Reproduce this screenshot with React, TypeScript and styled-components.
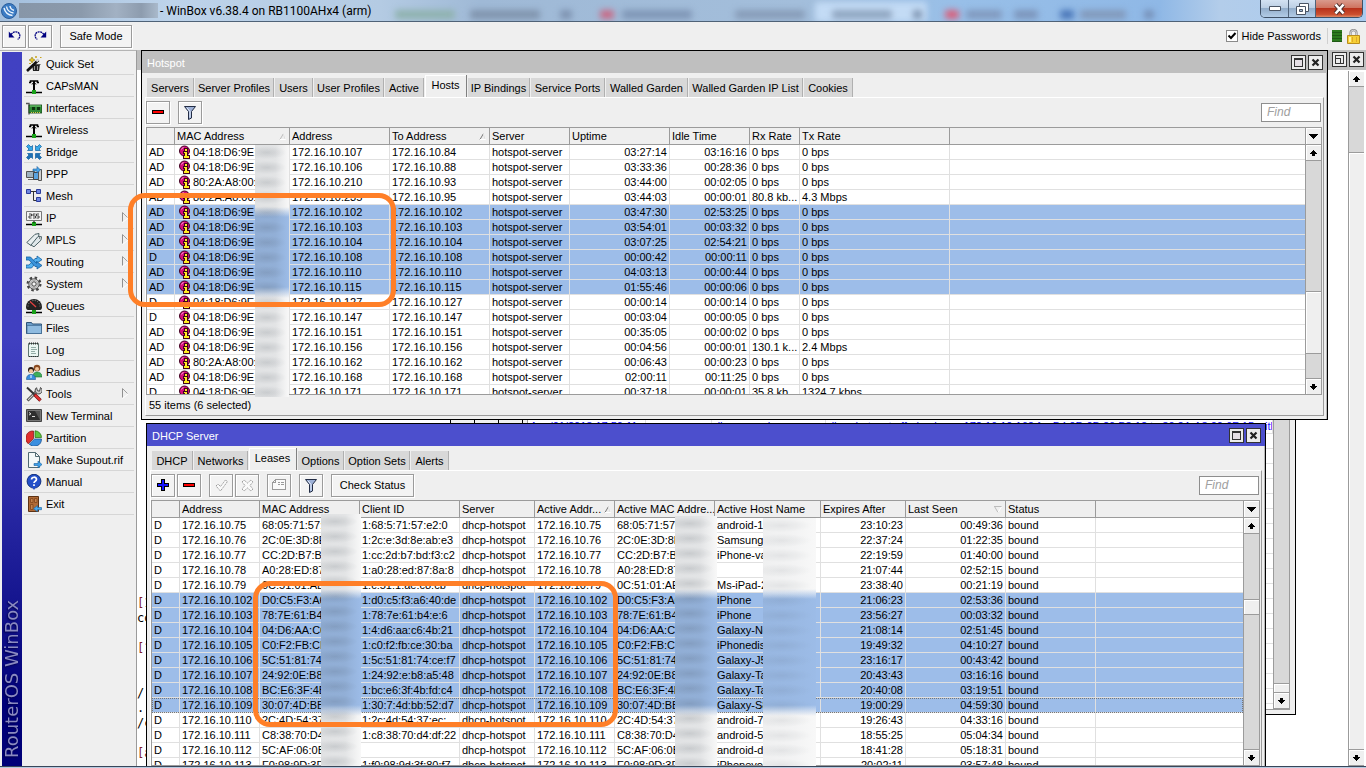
import React from "react";
import styled, { createGlobalStyle, css } from "styled-components";

const GlobalStyle = createGlobalStyle`
  * { box-sizing: border-box; }
  html, body { margin: 0; padding: 0; height: 100%; overflow: hidden; }
  body, button, input, table {
    font-family: "Liberation Sans", Arial, sans-serif;
    font-size: 11px;
    line-height: 14px;
    color: #000;
  }
`;

const face = "#efefef";
const edge = "#9b9b9b";
const dim = "#d8d8d8";
const select = "#9dbde9";
const grid = "#e0e0e0";

/* ---------- application frame ---------- */

const Shell = styled.div`
  height: 100vh;
  display: flex;
  flex-direction: column;
  overflow: hidden;
  background: ${face};
`;

const TitleBar = styled.header`
  position: relative;
  flex: none;
  height: 22px;
  display: flex;
  align-items: center;
  gap: 2px;
  padding-left: 1px;
  overflow: hidden;
  border-bottom: 1px solid #4f6277;
  background: linear-gradient(90deg, #a3bfdd 0, #bdd3ea 170px, #b4cbe3 380px, #9fb9d6 480px, #a3bedb 800px, #98bfe8 960px, #8fb8e6 1160px, #b3cdea 1220px, #a9cbf0 100%);
`;

const Smudge = styled.span<{ $x: number; $w: number; $c: string; $y?: number; $h?: number }>`
  position: absolute;
  left: ${(p) => p.$x}px;
  top: ${(p) => p.$y ?? 10}px;
  width: ${(p) => p.$w}px;
  height: ${(p) => p.$h ?? 9}px;
  border-radius: 3px;
  background: ${(p) => p.$c};
  filter: blur(3px);
`;

const HiddenName = styled.span`
  width: 139px;
  height: 15px;
  background: linear-gradient(90deg, #8796a8, #8b9aac 45%, #a2b1c3 70%, #8d9cae 88%, #a9b9cb);
`;

const TitleText = styled.h1`
  position: relative;
  margin: 0;
  font: 12px/18px Roboto, "Open Sans", sans-serif;
  white-space: nowrap;
`;

const WinControls = styled.div`
  position: relative;
  align-self: flex-start;
  margin-left: auto;
  margin-right: 3px;
  display: flex;
  height: 18px;
  border: 1px solid #3f5066;
  border-top: 0;
  border-radius: 0 0 5px 5px;
  overflow: hidden;
`;

const WinControl = styled.button<{ $w: number; $close?: boolean }>`
  width: ${(p) => p.$w}px;
  padding: 0;
  border: 0;
  border-right: ${(p) => (p.$close ? "0" : "1px solid #50637a")};
  display: flex;
  align-items: center;
  justify-content: center;
  background: ${(p) =>
    p.$close
      ? "linear-gradient(#d99a8c 0, #cf7460 45%, #b8321b 50%, #cb4f30 85%, #e08a66)"
      : "linear-gradient(#d3e2f2 0, #bccfe4 45%, #93aecb 50%, #b2cbe6)"};
`;

const ToolStrip = styled.div`
  flex: none;
  height: 28px;
  display: flex;
  align-items: center;
  gap: 2px;
  padding: 0 6px 0 2px;
`;

const PushButton = styled.button<{ $gap?: number; $w?: number }>`
  flex: none;
  height: 23px;
  width: ${(p) => p.$w ?? 24}px;
  margin-left: ${(p) => p.$gap ?? 0}px;
  padding: 0;
  display: flex;
  align-items: center;
  justify-content: center;
  border: 1px solid ${edge};
  background: #f3f3f3;
  box-shadow: inset 1px 1px #fff, 1px 1px #fff;
  white-space: nowrap;
`;

const HideLabel = styled.label`
  margin-left: auto;
  display: flex;
  align-items: center;
  gap: 4px;
  padding-right: 4px;
`;

const TickBox = styled.input`
  appearance: none;
  width: 12px;
  height: 12px;
  margin: 0;
  border: 1px solid #8a8a8a;
  background: #fff
    url("data:image/svg+xml,%3Csvg xmlns='http://www.w3.org/2000/svg' width='10' height='10'%3E%3Cpath d='M1.500 4.500l2.500 2.500 4.500-5' fill='none' stroke='black' stroke-width='2'/%3E%3C/svg%3E")
    center no-repeat;
`;

const StripRule = styled.span`
  width: 1px;
  height: 16px;
  margin-right: 2px;
  background: #d0d0d0;
`;

const LoadMeter = styled.span`
  width: 10px;
  height: 12px;
  margin-right: 3px;
  background: repeating-linear-gradient(#2c7a1e 0 2px, #1f5a15 2px 3px);
`;

const Body = styled.div`
  flex: 1;
  min-height: 0;
  display: flex;
`;

const TaskEdge = styled.footer`
  flex: none;
  height: 2px;
  border-top: 1px solid #38465a;
  background: #b9cbe0;
`;

/* ---------- left side ---------- */

const Side = styled.aside`
  flex: none;
  width: 137px;
  display: flex;
  padding: 1px 0 0 2px;
  border-top: 1px solid #b4b4b4;
  border-right: 1px solid ${edge};
`;

const Brand = styled.div`
  flex: none;
  width: 20px;
  display: flex;
  align-items: center;
  padding-top: 8px;
  writing-mode: vertical-rl;
  transform: rotate(180deg);
  background: linear-gradient(#000078 8%, #2a2aa6 38%, #4040c0 60%, #4141c2);
  color: #8a8ac0;
  font: 18px/20px "DejaVu Sans", sans-serif;
  text-shadow: -1px -1px 2px #00004c;
  white-space: nowrap;
`;

const Menu = styled.nav`
  flex: 1;
  min-width: 0;
  padding: 1px 2px 0 2px;
`;

const MenuItem = styled.button`
  width: 100%;
  height: 22px;
  display: flex;
  align-items: center;
  gap: 4px;
  padding: 0 5px 0 2px;
  border: 0;
  border-bottom: 1px solid #d6d6d6;
  background: none;
  text-align: left;
  white-space: nowrap;
`;

const MenuText = styled.span`
  flex: 1;
`;

/* ---------- windows ---------- */

const Desktop = styled.main`
  position: relative;
  flex: 1;
  min-width: 0;
  overflow: hidden;
  display: flex;
  flex-direction: column;
  background: #fff;
`;

const ParentBar = styled.div`
  flex: none;
  height: 20px;
  display: flex;
  align-items: center;
  justify-content: flex-end;
  gap: 2px;
  padding: 0 2px 1px 0;
  background: #bfbfbf;
`;

const ParentBody = styled.div`
  flex: 1;
  min-height: 0;
  display: flex;
  padding: 1px 2px 0 0;
`;

const Terminal = styled.pre`
  flex: 1;
  margin: 0;
  padding-bottom: 5px;
  align-self: flex-end;
  font: 12px/15px "DejaVu Sans Mono", monospace;
`;

const Maroon = styled.span`
  color: #80202a;
`;

const Win = styled.section<{ $l: number; $r: number; $t: number; $h?: number }>`
  position: absolute;
  left: ${(p) => p.$l}px;
  right: ${(p) => p.$r}px;
  top: ${(p) => p.$t}px;
  display: flex;
  flex-direction: column;
  border: 1px solid #000;
  background: ${face};
  overflow: hidden;
  ${(p) => (p.$h ? css`height: ${p.$h}px;` : css`bottom: 0; border-bottom: 0;`)}
`;

const WinBar = styled.div<{ $active?: boolean }>`
  flex: none;
  height: 22px;
  display: flex;
  align-items: center;
  gap: 2px;
  padding: 1px 4px 0 5px;
  color: #fff;
  background: ${(p) => (p.$active ? "#4c4fcd" : "#bfbfbf")};
`;

const WinName = styled.h2`
  flex: 1;
  margin: 0;
  font-size: 11px;
  font-weight: 400;
`;

const BarButton = styled.button`
  width: 15px;
  height: 15px;
  padding: 0;
  display: flex;
  align-items: center;
  justify-content: center;
  border: 1px solid #333;
  background: #ececec;
`;

const WinBody = styled.div<{ $open?: boolean }>`
  flex: 1;
  min-height: 0;
  display: flex;
  flex-direction: column;
  padding: ${(p) => (p.$open ? "0 3px 0 3px" : "0 3px 3px 3px")};
  box-shadow: inset -1px 0 #b8b8b8;
`;

const Tabs = styled.div`
  flex: none;
  height: 24px;
  display: flex;
  align-items: flex-end;
  gap: 1px;
  padding-left: 2px;
`;

const Tab = styled.button<{ $w: number; $on?: boolean }>`
  flex: none;
  width: ${(p) => p.$w}px;
  height: ${(p) => (p.$on ? 22 : 19)}px;
  padding: ${(p) => (p.$on ? "0 0 3px" : "1px 0 0")};
  border: 0;
  border-right: 1px solid ${(p) => (p.$on ? "#808080" : "#b0b0b0")};
  background: ${(p) => (p.$on ? face : dim)};
  box-shadow: ${(p) => (p.$on ? "inset 1px 1px #fff" : "none")};
  white-space: nowrap;
`;

const Panel = styled.div<{ $open?: boolean }>`
  flex: 1;
  min-height: 0;
  display: flex;
  flex-direction: column;
  padding-right: 1px;
  border: 1px solid #fff;
  border-right-color: ${edge};
  border-bottom: ${(p) => (p.$open ? "0" : `1px solid ${edge}`)};
`;

const Tools = styled.div`
  flex: none;
  height: 29px;
  display: flex;
  align-items: center;
  gap: 2px;
  padding: 0 1px 1px 0;
`;

const Find = styled.input`
  width: 60px;
  height: 19px;
  margin-left: auto;
  padding: 0 5px;
  border: 1px solid #8e8e8e;
  border-radius: 0;
  background: #fff;
  font-size: 12px;
  &::placeholder {
    color: #a0a0a0;
    font-style: italic;
  }
`;

const GridBox = styled.div`
  flex: 1;
  min-height: 0;
  display: flex;
  border: 1px solid ${edge};
  background: #fff;
`;

const GridView = styled.div`
  flex: 1;
  min-width: 0;
  overflow: hidden;
`;

const GridTable = styled.table`
  width: 100%;
  table-layout: fixed;
  border-collapse: separate;
  border-spacing: 0;
`;

const HeadCell = styled.th<{ $last?: boolean }>`
  height: 17px;
  padding: 0 0 0 2px;
  font-weight: 400;
  text-align: left;
  white-space: nowrap;
  overflow: hidden;
  background: ${face};
  border-bottom: 1px solid ${edge};
  border-right: ${(p) => (p.$last ? "0" : `1px solid ${edge}`)};
`;

const HeadFlex = styled.span`
  display: flex;
  align-items: center;
  justify-content: space-between;
  padding-right: 3px;
`;

const Row = styled.tr<{ $sel?: boolean; $focus?: boolean }>`
  background: ${(p) => (p.$sel ? select : "#fff")};
  ${(p) => p.$focus && css`outline: 1px dotted #777; outline-offset: -1px;`}
`;

const Cell = styled.td<{ $right?: boolean; $last?: boolean }>`
  height: 15px;
  padding: ${(p) => (p.$right ? "0 2px" : "0 0 0 2px")};
  line-height: 14px;
  white-space: nowrap;
  overflow: hidden;
  text-overflow: clip;
  text-align: ${(p) => (p.$right ? "right" : "left")};
  border-bottom: 1px solid ${grid};
  border-right: ${(p) => (p.$last ? "0" : `1px solid ${grid}`)};
`;

const WithMark = styled.span`
  display: flex;
  align-items: center;
  gap: 2px;
  height: 14px;
  padding-left: 2px;
`;

const StatusLine = styled.div`
  flex: none;
  height: 20px;
  padding: 3px 3px;
`;

/* ---------- scrollbars ---------- */

const ScrollCol = styled.div`
  flex: none;
  width: 16px;
  display: flex;
  flex-direction: column;
  border-left: 1px solid ${edge};
  background: ${dim};
`;

const ScrollButton = styled.button<{ $h?: number; $line?: "top" | "bottom" }>`
  flex: none;
  width: 100%;
  height: ${(p) => p.$h ?? 16}px;
  padding: 0;
  border: 0;
  border-bottom: ${(p) => (p.$line === "top" ? "0" : `1px solid ${edge}`)};
  border-top: ${(p) => (p.$line === "top" ? `1px solid ${edge}` : "0")};
  background: ${face};
  box-shadow: inset 1px 1px #fff;
  display: flex;
  align-items: center;
  justify-content: center;
`;

const Track = styled.div<{ $above: number; $below: number }>`
  flex: 1;
  min-height: 0;
  display: flex;
  padding: ${(p) => p.$above}px 0 ${(p) => p.$below}px;
`;

const Thumb = styled.div`
  flex: 1;
  border-top: 1px solid ${edge};
  border-bottom: 1px solid ${edge};
  background: ${face};
  box-shadow: inset 1px 1px #fff;
`;

/* ---------- overlays ---------- */

const Redacted = styled.div<{ $x: number; $y: number; $w: number; $to: number; $a: number; $b: number; $soft?: boolean }>`
  position: absolute;
  left: ${(p) => p.$x}px;
  top: ${(p) => p.$y}px;
  width: ${(p) => p.$w}px;
  height: ${(p) => p.$to - p.$y}px;
  background:
    radial-gradient(ellipse at 35% 50%, rgba(50, 60, 70, ${(p) => (p.$soft ? 0.08 : 0.14)}), transparent 62%) 0 0 / 100% 15px,
    linear-gradient(90deg, rgba(70, 80, 90, ${(p) => (p.$soft ? 0.06 : 0.14)}), rgba(70, 80, 90, ${(p) => (p.$soft ? 0.04 : 0.13)}) 60%, rgba(90, 90, 90, 0.01)),
    linear-gradient(#fafafa ${(p) => p.$a - 4}px, ${select} ${(p) => p.$a + 6}px, ${select} ${(p) => p.$b - 6}px, #fafafa ${(p) => p.$b + 5}px);
`;

const Ring = styled.div<{ $x: number; $y: number; $w: number; $h: number }>`
  position: absolute;
  left: ${(p) => p.$x}px;
  top: ${(p) => p.$y}px;
  width: ${(p) => p.$w}px;
  height: ${(p) => p.$h}px;
  border: 5px solid #ff7f27;
  border-radius: 17px;
  pointer-events: none;
`;

const Stage = styled.div`
  position: relative;
  flex: 1;
  min-width: 0;
  display: flex;
`;

/* ---------- log window ---------- */

const LogInner = styled.div`
  flex: 1;
  min-height: 0;
  margin: 3px 5px 4px 4px;
  display: flex;
  border: 1px solid ${edge};
  background: #fff;
`;

const LogRow = styled.div`
  height: 15px;
  display: flex;
  border-bottom: 1px solid ${grid};
  color: #1414ff;
  white-space: nowrap;
  overflow: hidden;
`;

const LogCell = styled.span<{ $w?: number }>`
  flex: ${(p) => (p.$w ? "none" : "1")};
  width: ${(p) => (p.$w ? `${p.$w}px` : "auto")};
  padding-left: 2px;
  border-right: 1px solid ${grid};
  overflow: hidden;
`;

/* ---------- glyphs ---------- */

const Svg = ({ w = 16, h = 16, children, crisp }: { w?: number; h?: number; children: React.ReactNode; crisp?: boolean }) => (
  <svg width={w} height={h} viewBox={`0 0 ${w} ${h}`} fill="none" aria-hidden="true" shapeRendering={crisp ? "crispEdges" : "auto"}>
    {children}
  </svg>
);

const ArrowUp = () => (
  <Svg w={9} h={6} crisp><path d="M4 0h1v1h1v1h1v1h1v1H6v2H3V4H1V3h1V2h1V1h1z" fill="#000" /></Svg>
);
const ArrowDown = () => (
  <Svg w={9} h={6} crisp><path d="M3 0h3v2h2v1H7v1H6v1H5v1H4V5H3V4H2V3H1V2h2z" fill="#000" /></Svg>
);
const DropArrow = () => (
  <Svg w={9} h={5} crisp><path d="M0 0h9v1H8v1H7v1H6v1H5v1H4V4H3V3H2V2H1V1H0z" fill="#000" /></Svg>
);
const SortUp = ({ faint }: { faint?: boolean }) => (
  <Svg w={7} h={7}><path d="M1 6.500L4.500.5" stroke={faint ? "#bbb" : "#777"} /><path d="M4.500.5L6.500 6.500H1" stroke="#fff" /><path d="M4.500 1l1.500 5" stroke="#ddd" /></Svg>
);
const SortDown = () => (
  <Svg w={8} h={7}><path d="M0 .5h7.500M.5.5l3.500 6" stroke="#bbb" /><path d="M7.500 1L4 6.500" stroke="#fff" /></Svg>
);
const MaxGlyph = () => (
  <Svg w={9} h={9} crisp><path d="M.5.5h8v8h-8z" stroke="#333" fill="#e6e0e6" /><path d="M0 0h9v2H0z" fill="#333" /></Svg>
);
const RestoreGlyph = () => (
  <Svg w={9} h={9} crisp><path d="M.5.5h8v8h-8z" stroke="#333" /><path d="M.5 3.500h5v5" stroke="#333" /></Svg>
);
const CloseGlyph = () => (
  <Svg w={9} h={9}><path d="M1.500 1.500l6 6M7.500 1.500l-6 6" stroke="#222" strokeWidth="2.200" /></Svg>
);
const Funnel = () => (
  <Svg w={14} h={15}>
    <path d="M1.500 1.500h11L8.500 6.500v6.500l-3 1.500v-8z" fill="#9db0d6" stroke="#222c44" strokeLinejoin="round" />
    <path d="M4 2.800l3 3.700v6" stroke="#e6eefc" />
  </Svg>
);
const Minus = () => (
  <Svg w={12} h={4} crisp><path d="M0 0h12v4H0z" fill="#000" /><path d="M1 1h10v2H1z" fill="#f00" /></Svg>
);
const Plus = () => (
  <Svg w={12} h={12} crisp><path d="M4 0h4v4h4v4H8v4H4V8H0V4h4z" fill="#000" /><path d="M5 1h2v4h4v2H7v4H5V7H1V5h4z" fill="#1414ff" /></Svg>
);
const Check = () => (
  <Svg w={13} h={13}><path d="M1 7l2-2 2.500 2.500L10.500 1l2 1.500-7 9.500z" stroke="#9c9c9c" strokeDasharray="1.500 .7" fill="#fafafa" /></Svg>
);
const Cross = () => (
  <Svg w={13} h={13}><path d="M1 3l2-2 3.500 3L10 1l2 2-3 3.500L12 10l-2 2-3.500-3L3 12l-2-2 3-3.500z" stroke="#9c9c9c" strokeDasharray="1.500 .7" fill="#fafafa" /></Svg>
);
const Note = () => (
  <Svg w={14} h={12} crisp><path d="M3.500.5h10v10H.5v-7z" stroke="#9a9a9a" fill="#fafafa" /><path d="M3.500.5v3H.5M6 3.500h2m1 0h3M6 5.500h2m1 0h3" stroke="#9a9a9a" /></Svg>
);
const Undo = () => (
  <Svg w={13} h={12}><path d="M3 4.500C5 2 8 .8 10.500 2.800c2.200 2 1.500 5.200-.8 6.700" stroke="#000080" strokeWidth="1.300" strokeDasharray="2 .6" /><path d="M.8 1.500V7.500H6.500z" fill="#000080" /></Svg>
);
const Redo = () => (
  <Svg w={13} h={12}><path d="M10 4.500C8 2 5 .8 2.500 2.800.3 4.800 1 8 3.300 9.500" stroke="#000080" strokeWidth="1.300" strokeDasharray="2 .6" /><path d="M12.200 1.500V7.500H6.500z" fill="#000080" /></Svg>
);
const Lock = () => (
  <Svg w={13} h={15}>
    <path d="M3.500 7V4.200a3 3 0 016 0V7" stroke="#8b8b8b" strokeWidth="2.200" /><path d="M3.500 7V4.200a3 3 0 016 0V7" stroke="#e6e6e6" strokeWidth=".8" />
    <path d="M.5 6.500h12v8H.5z" fill="#f6cf35" stroke="#b98d1e" /><path d="M2 8h2v5H2z" fill="#fff09a" /><path d="M5 8h1v5H5zM9 8h1v5H9z" fill="#e0a92a" />
  </Svg>
);
const HostMark = () => (
  <Svg w={12} h={14}>
    <circle cx="5.500" cy="6" r="5" fill="#d4107c" stroke="#400020" /><path d="M2.500 4.500a3.500 3.500 0 012-2" stroke="#ffb0dc" />
    <path d="M5 3h4v3h0v4h2v4H4v-4h1V9H4V6h1z" fill="#400020" /><path d="M6 4h2v2H6zM5 7h3v4h2v2H5v-2h1V8H5z" fill="#ffee20" />
  </Svg>
);
const SubArrow = () => (
  <Svg w={7} h={11}><path d="M.5.5v9" stroke="#909090" /><path d="M.5.5l5 5" stroke="#a0a0a0" /><path d="M6 6L.5 10.500" stroke="#fff" /></Svg>
);
const AppMark = () => (
  <Svg w={16} h={16}>
    <circle cx="8" cy="8" r="7.500" fill="#3b7cc4" stroke="#2a5e9c" />
    <path d="M3 5c1 4 4 7 8.500 7.500M5.500 3.500c.5 3 3 6 7 6.500M9 3c0 1.500 1.500 4 4 4.300" stroke="#eaf4ff" strokeWidth="1.400" />
  </Svg>
);

const Antenna = () => (
  <>
    <path d="M0 14.500h16" stroke="#000" strokeWidth="1.500" /><path d="M8 3v9" stroke="#000" strokeWidth="2" />
    <path d="M3 4.500h1.500V3h7v1.500H13" stroke="#000" strokeWidth="1.500" /><path d="M6 6.500L8 4l2 2.500" stroke="#000" />
    <path d="M6 12h4v4H6z" fill="#18a018" />
  </>
);

const menuArt: Record<string, React.ReactNode> = {
  wand: (
    <>
      <path d="M6 8h8l-1 7H7z" fill="#222" /><path d="M8.500 10v4M11.500 10v4" stroke="#999" /><path d="M6 8.500h8.500" stroke="#555" />
      <path d="M1 15L12.500 4" stroke="#111" strokeWidth="2.600" /><path d="M10.500 5.500l2-2" stroke="#ddd" strokeWidth="2" />
      <path d="M6 1l1 2 2 1-2 1-1 2-1-2-2-1 2-1z" fill="#e6c52a" stroke="#8f7a14" strokeWidth=".6" /><path d="M10 0v2M9 1h2M3 7.500h2M14 1.500h1.500" stroke="#c9a51c" />
    </>
  ),
  antenna: <Antenna />,
  card: (
    <>
      <path d="M0 3.500h3v11" stroke="#555" strokeWidth="1.400" /><path d="M3 5h13v8H3z" fill="#2f8a35" stroke="#143f16" strokeWidth=".8" />
      <path d="M6 7h3v3H6zM11 7h3v3h-3z" fill="#0d3510" /><path d="M5 12.500h9" stroke="#d8c94a" strokeDasharray="1 1" /><path d="M4 6h11" stroke="#7bd07d" />
    </>
  ),
  bridge: (
    <g fill="#38a9e8" stroke="#0f5f9f" strokeWidth=".7">
      <path d="M.5 2.500l2-2L5 3l1.500-1.500v5h-5L3 5z" /><path d="M15.500 2.500l-2-2L11 3 9.500 1.500v5h5L13 5z" />
      <path d="M.5 13.500l2 2L5 13l1.500 1.500v-5h-5L3 11z" fill="#1d6fb4" /><path d="M15.500 13.500l-2 2L11 13l-1.500 1.500v-5h5L13 11z" fill="#1d6fb4" />
    </g>
  ),
  ppp: (
    <>
      <path d="M.5 5.500h8v6h-8z" fill="#9fb2c0" stroke="#555" /><path d="M2 13.500h6" stroke="#666" />
      <path d="M7.500 6.500h6v7h-6z" fill="#5aa3e0" stroke="#444" /><path d="M12.500 3.500h3v11h-3z" fill="#cfcfcf" stroke="#555" />
      <path d="M7 3h4V.5L14.500 4 11 7V5H7z" fill="#4aa5ea" stroke="#1d5e9a" strokeWidth=".6" />
    </>
  ),
  mesh: (
    <>
      <path d="M4 3.500h7M7.500 3.500v9H11" stroke="#333" />
      <g fill="#6f86e0" stroke="#2c3c9c"><path d="M.5 1.500h4v4h-4z" /><path d="M10.500 1.500h4v4h-4z" /><path d="M10.500 9.500h4v4h-4z" /></g>
    </>
  ),
  ip: (
    <>
      <path d="M.5 1.500h15v9H.5z" fill="#f4f4f4" stroke="#777" />
      <path d="M3 4h2.500v2H3v2h2.500M9.500 4H7v2h2.500v2H7M13 4h-2.500v2H13v2h-2.500" stroke="#333" strokeWidth=".9" />
      <path d="M0 14.500h16" stroke="#000" strokeWidth="1.500" /><path d="M6 12h4v4H6z" fill="#18a018" /><path d="M8 11v2" stroke="#000" />
    </>
  ),
  mpls: (
    <>
      <path d="M.8 10.500L9 2.300l4-.8-.5 3.800L5 13.500z" fill="#e8eef0" stroke="#4b6166" />
      <path d="M5 13L12 4.500l3.500.2-.5 3.500L8 14.800z" fill="#dfe7ea" stroke="#4b6166" /><path d="M13 6h1" stroke="#333" />
    </>
  ),
  routing: (
    <>
      <path d="M0 11h3l6-6.500h2V2l5 3.700L11 9V7.500L5.500 14H0z" fill="#55b2f0" stroke="#14609f" strokeWidth=".8" />
      <path d="M0 3h4.500l6 6.500V7.500L16 11.500 11 15v-2.500H9L3 6H0z" fill="#3a93db" stroke="#14609f" strokeWidth=".8" />
    </>
  ),
  gear: (
    <>
      <circle cx="8" cy="8" r="6.400" stroke="#444" strokeWidth="2.200" strokeDasharray="2.500 2.500" />
      <circle cx="8" cy="8" r="5.200" fill="#ddd" stroke="#555" /><circle cx="8" cy="8" r="2.200" fill="#f4f4f4" stroke="#444" /><circle cx="8" cy="8" r="3.700" stroke="#999" strokeWidth=".7" />
    </>
  ),
  gauge: (
    <>
      <path d="M0 9a8 8 0 0116 0c0 2-1 3-2 3H2C1 12 0 11 0 9z" fill="#222" /><path d="M2 8.500a6 6 0 0112 0" stroke="#999" strokeDasharray="1 1.500" />
      <path d="M4 3.500L10 9" stroke="#e04040" strokeWidth="1.300" /><path d="M0 14.500h16" stroke="#000" strokeWidth="1.500" /><path d="M6 12h4v4H6z" fill="#18a018" />
    </>
  ),
  folder: (
    <>
      <path d="M.5 13.500v-11h5l1 1.500h9v9.500z" fill="#6b9cc9" stroke="#2f5478" /><path d="M1 5.500h14.500v8H1z" fill="#8fbbe0" stroke="#3f6890" strokeWidth=".7" />
    </>
  ),
  log: (
    <>
      <path d="M2.500 1.500h10v13h-10z" fill="#eaf6f2" stroke="#5f7771" /><path d="M3 1.500h10" stroke="#333" strokeDasharray="1 1" strokeWidth="2" /><path d="M3 14.500h10" stroke="#333" strokeDasharray="1 1" />
      <path d="M5 5.500h5M5 7.500h6M5 9.500h4M5 11.500h5" stroke="#93aca6" />
    </>
  ),
  people: (
    <>
      <circle cx="11" cy="4" r="3.300" fill="#8a4a20" /><circle cx="11" cy="5" r="2" fill="#f0c49a" /><path d="M7 13c0-4 2-5 4-5s5 1 5 5z" fill="#3fae5a" stroke="#1d6b30" strokeWidth=".6" />
      <circle cx="5" cy="6" r="3" fill="#2a1a12" /><circle cx="5" cy="7.200" r="2.100" fill="#f0c49a" /><path d="M.5 15.500c0-4 2-5 4.500-5s4.500 1 4.500 5z" fill="#3a8ede" stroke="#1c5390" strokeWidth=".6" /><path d="M5 11v3" stroke="#fff" />
    </>
  ),
  tools: (
    <>
      <path d="M1.500 14.500L11 5" stroke="#333" strokeWidth="2.800" /><path d="M2 14L11 5" stroke="#ccc" strokeWidth="1.200" />
      <path d="M14.500 1.500a3.500 3.500 0 11-4 .2l1 3 2 .5z" fill="#ccc" stroke="#333" strokeWidth=".9" />
      <path d="M1 1.500l7.500 7" stroke="#333" strokeWidth="2" /><path d="M8.500 8.500l6 6" stroke="#701010" strokeWidth="3.400" /><path d="M9 9l5.300 5.300" stroke="#e83232" strokeWidth="2" />
    </>
  ),
  terminal: (
    <>
      <path d="M.5 1.500h15v12H.5z" fill="#777" stroke="#444" /><path d="M2 3h12v9H2z" fill="#2e2e2e" /><path d="M3 4.500l2 1.300-2 1.300M6 8.500h3" stroke="#ddd" /><path d="M9 3h5v9z" fill="#555" />
    </>
  ),
  pie: (
    <>
      <path d="M7.500 1v7.500L2.200 13.800A7.300 7.300 0 017.500 1z" fill="#e03030" stroke="#7a1010" strokeWidth=".7" /><path d="M9 .8a6.700 6.700 0 016.500 6.700H9z" fill="#5fc63d" stroke="#256a12" strokeWidth=".7" />
      <path d="M8.500 9h7A7.200 7.200 0 013.200 14.200z" fill="#3a8fe0" stroke="#164a86" strokeWidth=".7" />
    </>
  ),
  supout: (
    <>
      <path d="M2.500.5h7l4 4v11h-11z" fill="#f3f8f8" stroke="#516a72" /><path d="M9.500.5v4h4" stroke="#516a72" />
      <path d="M8 11.500h4V9l4 3.500L12 16v-2.500H8z" fill="#3ea0e8" stroke="#14609f" strokeWidth=".6" />
    </>
  ),
  manual: (
    <>
      <circle cx="8" cy="7.200" r="6.900" fill="#2450c8" stroke="#12307e" /><path d="M6 13l2 3 2-3z" fill="#2450c8" />
      <path d="M5.500 5.500c.2-3 5-3 5-.2 0 2-2.500 1.800-2.500 3.700M8 10.200v1.800" stroke="#fff" strokeWidth="1.700" />
    </>
  ),
  exit: (
    <>
      <path d="M2.500.5h10v15h-10z" fill="#b06a36" stroke="#5e3213" /><path d="M4.500 2.500h2.500v4H4.500zM8.500 2.500H11v4H8.500zM4.500 8.500h2.500v5H4.500z" stroke="#8a4c20" fill="#c5824c" />
      <path d="M15.500 11.500h-4V9.500L7.500 12.700l4 3v-2h4z" fill="#4aa8ec" stroke="#14609f" strokeWidth=".6" />
    </>
  ),
};

/* ---------- data ---------- */

const menu: [string, string, boolean?][] = [
  ["Quick Set", "wand"], ["CAPsMAN", "antenna"], ["Interfaces", "card"], ["Wireless", "antenna"],
  ["Bridge", "bridge"], ["PPP", "ppp"], ["Mesh", "mesh"], ["IP", "ip", true], ["MPLS", "mpls", true],
  ["Routing", "routing", true], ["System", "gear", true], ["Queues", "gauge"], ["Files", "folder"],
  ["Log", "log"], ["Radius", "people"], ["Tools", "tools", true], ["New Terminal", "terminal"],
  ["Partition", "pie"], ["Make Supout.rif", "supout"], ["Manual", "manual"], ["Exit", "exit"],
];

type Column = { name: string; w?: number; right?: boolean; sort?: "up" | "upFaint" | "down" };

const hostColumns: Column[] = [
  { name: "", w: 28 }, { name: "MAC Address", w: 115, sort: "upFaint" }, { name: "Address", w: 100 },
  { name: "To Address", w: 100, sort: "up" }, { name: "Server", w: 80 }, { name: "Uptime", w: 100, right: true },
  { name: "Idle Time", w: 80, right: true }, { name: "Rx Rate", w: 50 }, { name: "Tx Rate", w: 150 }, { name: "" },
];

const A = "04:18:D6:9E:";
const B = "80:2A:A8:00:";
const hosts: string[][] = [
  ["AD", A, "107", "84", "03:27:14", "03:16:16", "0 bps", "0 bps"],
  ["AD", A, "106", "88", "03:33:36", "00:28:36", "0 bps", "0 bps"],
  ["AD", B, "210", "93", "03:44:00", "00:02:05", "0 bps", "0 bps"],
  ["AD", B, "235", "95", "03:44:03", "00:00:01", "80.8 kb...", "4.3 Mbps"],
  ["AD", A, "102", "102", "03:47:30", "02:53:25", "0 bps", "0 bps", "s"],
  ["AD", A, "103", "103", "03:54:01", "00:03:32", "0 bps", "0 bps", "s"],
  ["AD", A, "104", "104", "03:07:25", "02:54:21", "0 bps", "0 bps", "s"],
  ["D", A, "108", "108", "00:00:42", "00:00:11", "0 bps", "0 bps", "s"],
  ["AD", A, "110", "110", "04:03:13", "00:00:44", "0 bps", "0 bps", "s"],
  ["AD", A, "115", "115", "01:55:46", "00:00:06", "0 bps", "0 bps", "s"],
  ["D", A, "127", "127", "00:00:14", "00:00:14", "0 bps", "0 bps"],
  ["D", A, "147", "147", "00:03:04", "00:00:05", "0 bps", "0 bps"],
  ["AD", A, "151", "151", "00:35:05", "00:00:02", "0 bps", "0 bps"],
  ["AD", A, "156", "156", "00:04:56", "00:00:01", "130.1 k...", "2.4 Mbps"],
  ["AD", B, "162", "162", "00:06:43", "00:00:23", "0 bps", "0 bps"],
  ["AD", A, "168", "168", "02:00:11", "00:11:25", "0 bps", "0 bps"],
  ["D", A, "171", "171", "00:37:18", "00:00:01", "35.8 kb...", "1324.7 kbps"],
];

const leaseColumns: Column[] = [
  { name: "", w: 28 }, { name: "Address", w: 80 }, { name: "MAC Address", w: 100 }, { name: "Client ID", w: 100 },
  { name: "Server", w: 75 }, { name: "Active Addr...", w: 80, sort: "up" }, { name: "Active MAC Addre...", w: 100 },
  { name: "Active Host Name", w: 106 }, { name: "Expires After", w: 85, right: true },
  { name: "Last Seen", w: 100, right: true, sort: "down" }, { name: "Status", w: 90 }, { name: "" },
];

const leases: string[][] = [
  ["75", "68:05:71:57:", "1:68:5:71:57:e2:0", "68:05:71:57", "android-11", "23:10:23", "00:49:36"],
  ["76", "2C:0E:3D:8E", "1:2c:e:3d:8e:ab:e3", "2C:0E:3D:8E", "Samsung-", "22:37:24", "01:22:35"],
  ["77", "CC:2D:B7:BD", "1:cc:2d:b7:bd:f3:c2", "CC:2D:B7:B", "iPhone-va", "22:19:59", "01:40:00"],
  ["78", "A0:28:ED:87", "1:a0:28:ed:87:8a:8", "A0:28:ED:87", "", "21:07:44", "02:52:15"],
  ["79", "0C:51:01:AE", "1:c:51:1:ae:c8:cb", "0C:51:01:AE", "Ms-iPad-2", "23:38:40", "00:21:19"],
  ["102", "D0:C5:F3:A6", "1:d0:c5:f3:a6:40:de", "D0:C5:F3:A6", "iPhone", "21:06:23", "02:53:36", "s"],
  ["103", "78:7E:61:B4", "1:78:7e:61:b4:e:6", "78:7E:61:B4", "iPhone", "23:56:27", "00:03:32", "s"],
  ["104", "04:D6:AA:C6", "1:4:d6:aa:c6:4b:21", "04:D6:AA:C6", "Galaxy-No", "21:08:14", "02:51:45", "s"],
  ["105", "C0:F2:FB:CE", "1:c0:f2:fb:ce:30:ba", "C0:F2:FB:CE", "iPhonedis", "19:49:32", "04:10:27", "s"],
  ["106", "5C:51:81:74", "1:5c:51:81:74:ce:f7", "5C:51:81:74", "Galaxy-J5", "23:16:17", "00:43:42", "s"],
  ["107", "24:92:0E:B8", "1:24:92:e:b8:a5:48", "24:92:0E:B8", "Galaxy-Ta", "20:43:43", "03:16:16", "s"],
  ["108", "BC:E6:3F:4B", "1:bc:e6:3f:4b:fd:c4", "BC:E6:3F:4B", "Galaxy-Ta", "20:40:08", "03:19:51", "s"],
  ["109", "30:07:4D:BB", "1:30:7:4d:bb:52:d7", "30:07:4D:BB", "Galaxy-S8", "19:00:29", "04:59:30", "sf"],
  ["110", "2C:4D:54:37", "1:2c:4d:54:37:ec:", "2C:4D:54:37", "android-79", "19:26:43", "04:33:16"],
  ["111", "C8:38:70:D4", "1:c8:38:70:d4:df:22", "C8:38:70:D4", "android-50", "18:55:25", "05:04:34"],
  ["112", "5C:AF:06:0B", "", "5C:AF:06:0B", "android-do", "18:41:28", "05:18:31"],
  ["113", "F0:98:9D:3F", "1:f0:98:9d:3f:80:f7", "F0:98:9D:3F", "iPhoneyou", "20:02:11", "03:57:48"],
];

/* ---------- parts ---------- */

const DataGrid = ({ columns, rows, above, below, mark }: {
  columns: Column[];
  rows: { cells: string[]; sel?: boolean; focus?: boolean }[];
  above: number;
  below: number;
  mark?: number;
}) => (
  <GridBox>
    <GridView>
      <GridTable>
        <colgroup>{columns.map((c, i) => <col key={i} width={c.w} />)}</colgroup>
        <thead>
          <tr>
            {columns.map((c, i) => (
              <HeadCell key={i} $last={i === columns.length - 1}>
                {c.sort ? (
                  <HeadFlex>{c.name}{c.sort === "down" ? <SortDown /> : <SortUp faint={c.sort === "upFaint"} />}</HeadFlex>
                ) : c.name}
              </HeadCell>
            ))}
          </tr>
        </thead>
        <tbody>
          {rows.map((r, i) => (
            <Row key={i} $sel={r.sel} $focus={r.focus}>
              {columns.map((c, j) => (
                <Cell key={j} $right={c.right} $last={j === columns.length - 1}>
                  {mark === j ? <WithMark><HostMark />{r.cells[j]}</WithMark> : r.cells[j]}
                </Cell>
              ))}
            </Row>
          ))}
        </tbody>
      </GridTable>
    </GridView>
    <ScrollCol>
      <ScrollButton $h={17} aria-label="Columns"><DropArrow /></ScrollButton>
      <ScrollButton aria-label="Scroll up"><ArrowUp /></ScrollButton>
      <Track $above={above} $below={below}><Thumb /></Track>
      <ScrollButton $line="top" aria-label="Scroll down"><ArrowDown /></ScrollButton>
    </ScrollCol>
  </GridBox>
);

const TabRow = ({ tabs, on }: { tabs: [string, number][]; on: string }) => (
  <Tabs role="tablist">
    {tabs.map(([name, w]) => (
      <Tab key={name} role="tab" aria-selected={name === on} $w={w} $on={name === on}>{name}</Tab>
    ))}
  </Tabs>
);

const WindowBar = ({ name, active }: { name: string; active?: boolean }) => (
  <WinBar $active={active}>
    <WinName>{name}</WinName>
    <BarButton aria-label="Maximize"><MaxGlyph /></BarButton>
    <BarButton aria-label="Close"><CloseGlyph /></BarButton>
  </WinBar>
);

const ip = (n: string) => `172.16.10.${n}`;

export default function App() {
  return (
    <Shell>
      <GlobalStyle />
      <TitleBar>
        <Smudge $x={395} $w={60} $c="#8fb2ae" /><Smudge $x={470} $w={70} $c="#8094ad" /><Smudge $x={560} $w={12} $c="#7d92b0" />
        <Smudge $x={600} $w={14} $c="#c86a86" /><Smudge $x={622} $w={70} $c="#7f96b6" /><Smudge $x={735} $w={70} $c="#879cb8" />
        <Smudge $x={815} $w={112} $c="#c3dbf5" $y={2} $h={20} /><Smudge $x={832} $w={60} $c="#8fa5c0" /><Smudge $x={913} $w={9} $c="#7d93b0" />
        <Smudge $x={945} $w={14} $c="#d8607c" /><Smudge $x={966} $w={36} $c="#8199be" /><Smudge $x={1014} $w={24} $c="#7c95bb" />
        <Smudge $x={1060} $w={14} $c="#4a76b8" /><Smudge $x={1080} $w={46} $c="#8299bb" /><Smudge $x={1144} $w={10} $c="#7690b8" />
        <AppMark />
        <HiddenName />
        <TitleText>- WinBox v6.38.4 on RB1100AHx4 (arm)</TitleText>
        <WinControls>
          <WinControl $w={28} aria-label="Minimize"><Svg w={12} h={5}><path d="M.5.5h11v4H.5z" fill="#fff" stroke="#4a5565" /></Svg></WinControl>
          <WinControl $w={27} aria-label="Restore">
            <Svg w={13} h={12}><path d="M3.500.5h9v8h-9z" fill="#fff" stroke="#4a5565" /><path d="M.5 3.500h9v8h-9z" fill="#fff" stroke="#4a5565" /><path d="M3.500 6.500h3v2h-3z" fill="#9fb6d0" stroke="#4a5565" /></Svg>
          </WinControl>
          <WinControl $w={46} $close aria-label="Close">
            <Svg w={13} h={12}><path d="M2.500 1.500l8 9M10.500 1.500l-8 9" stroke="#4f3230" strokeWidth="4.500" /><path d="M2.500 1.500l8 9M10.500 1.500l-8 9" stroke="#fff" strokeWidth="2.600" /></Svg>
          </WinControl>
        </WinControls>
      </TitleBar>

      <ToolStrip>
        <PushButton aria-label="Undo"><Undo /></PushButton>
        <PushButton aria-label="Redo"><Redo /></PushButton>
        <PushButton $gap={6} $w={72}>Safe Mode</PushButton>
        <HideLabel><TickBox type="checkbox" defaultChecked />Hide Passwords</HideLabel>
        <StripRule /><LoadMeter /><Lock />
      </ToolStrip>

      <Body>
        <Side>
          <Brand>RouterOS WinBox</Brand>
          <Menu>
            {menu.map(([name, art, sub]) => (
              <MenuItem key={name}><Svg>{menuArt[art]}</Svg><MenuText>{name}</MenuText>{sub && <SubArrow />}</MenuItem>
            ))}
          </Menu>
        </Side>

        <Stage>
          <Desktop>
            <ParentBar>
              <BarButton aria-label="Restore window"><RestoreGlyph /></BarButton>
              <BarButton aria-label="Close window"><CloseGlyph /></BarButton>
            </ParentBar>
            <ParentBody>
              <Terminal>
                <Maroon>{"[1"}</Maroon>{"\nco\n\n"}<Maroon>{"[?"}</Maroon>{"\n\n\n/\n.\n/c\n\n"}<Maroon>{"[a"}</Maroon>
              </Terminal>
              <ScrollCol>
                <ScrollButton aria-label="Scroll up"><ArrowUp /></ScrollButton>
                <Track $above={65} $below={0}><Thumb /></Track>
                <ScrollButton aria-label="Scroll down"><ArrowDown /></ScrollButton>
              </ScrollCol>
            </ParentBody>

            <Win $l={313} $r={300} $t={300} $h={200} /><Win $l={337} $r={300} $t={300} $h={200} /><Win $l={361} $r={300} $t={300} $h={200} />
            <Win $l={385} $r={70} $t={304} $h={361}>
              <LogInner>
                <GridView>
                  {Array.from({ length: 4 }, (_, i) => <LogRow key={i} />)}
                  <LogRow>
                    <LogCell $w={118}>Aug/01/2018 17:50:11</LogCell><LogCell $w={66}>memory</LogCell>
                    <LogCell $w={114}>dhcp, warning</LogCell>
                    <LogCell>dhcp-hotspot offering lease 172.16.10.162 for B4:0D:0B:20:B3:12 to 80:2A:A8:00:6F:15 without</LogCell>
                  </LogRow>
                  {Array.from({ length: 19 }, (_, i) => <LogRow key={i} />)}
                </GridView>
                <ScrollCol>
                  <ScrollButton aria-label="Scroll up"><ArrowUp /></ScrollButton>
                  <Track $above={308} $below={0}><Thumb /></Track>
                  <ScrollButton aria-label="Scroll down"><ArrowDown /></ScrollButton>
                </ScrollCol>
              </LogInner>
            </Win>

            <Win $l={4} $r={38} $t={0} $h={370}>
              <WindowBar name="Hotspot" />
              <WinBody>
                <TabRow on="Hosts" tabs={[["Servers", 47], ["Server Profiles", 79], ["Users", 38], ["User Profiles", 70], ["Active", 39], ["Hosts", 42], ["IP Bindings", 62], ["Service Ports", 74], ["Walled Garden", 82], ["Walled Garden IP List", 114], ["Cookies", 49]]} />
                <Panel>
                  <Tools>
                    <PushButton aria-label="Remove"><Minus /></PushButton>
                    <PushButton $gap={6} aria-label="Filter"><Funnel /></PushButton>
                    <Find aria-label="Find host" placeholder="Find" />
                  </Tools>
                  <DataGrid
                    columns={hostColumns} mark={1} above={130} below={24}
                    rows={hosts.map((h) => ({
                      sel: h[8] === "s",
                      cells: [h[0], h[1], ip(h[2]), ip(h[3]), "hotspot-server", h[4], h[5], h[6], h[7], ""],
                    }))}
                  />
                  <StatusLine>55 items (6 selected)</StatusLine>
                </Panel>
              </WinBody>
              <Redacted $x={113} $y={94} $w={34} $to={346} $a={66} $b={148} />
            </Win>

            <Win $l={9} $r={100} $t={373}>
              <WindowBar name="DHCP Server" active />
              <WinBody $open>
                <TabRow on="Leases" tabs={[["DHCP", 41], ["Networks", 54], ["Leases", 48], ["Options", 46], ["Option Sets", 65], ["Alerts", 38]]} />
                <Panel $open>
                  <Tools>
                    <PushButton aria-label="Add"><Plus /></PushButton>
                    <PushButton aria-label="Remove"><Minus /></PushButton>
                    <PushButton $gap={6} aria-label="Enable"><Check /></PushButton>
                    <PushButton aria-label="Disable"><Cross /></PushButton>
                    <PushButton $gap={6} aria-label="Comment"><Note /></PushButton>
                    <PushButton $gap={6} aria-label="Filter"><Funnel /></PushButton>
                    <PushButton $gap={6} $w={83}>Check Status</PushButton>
                    <Find aria-label="Find lease" placeholder="Find" />
                  </Tools>
                  <DataGrid
                    columns={leaseColumns} above={65} below={134}
                    rows={leases.map((l) => ({
                      sel: !!l[7], focus: l[7] === "sf",
                      cells: ["D", ip(l[0]), l[1], l[2], "dhcp-hotspot", ip(l[0]), l[3], l[4], l[5], l[6], "bound", ""],
                    }))}
                  />
                </Panel>
              </WinBody>
              <Redacted $x={174} $y={90} $w={40} $to={343} $a={79} $b={197} />
              <Redacted $x={528} $y={92} $w={42} $to={343} $a={77} $b={195} />
              <Redacted $x={616} $y={94} $w={53} $to={343} $a={75} $b={193} $soft />
            </Win>
          </Desktop>
          <Ring $x={-9} $y={143} $w={268} $h={114} />
          <Ring $x={116} $y={531} $w={365} $h={146} />
        </Stage>
      </Body>
      <TaskEdge />
    </Shell>
  );
}
